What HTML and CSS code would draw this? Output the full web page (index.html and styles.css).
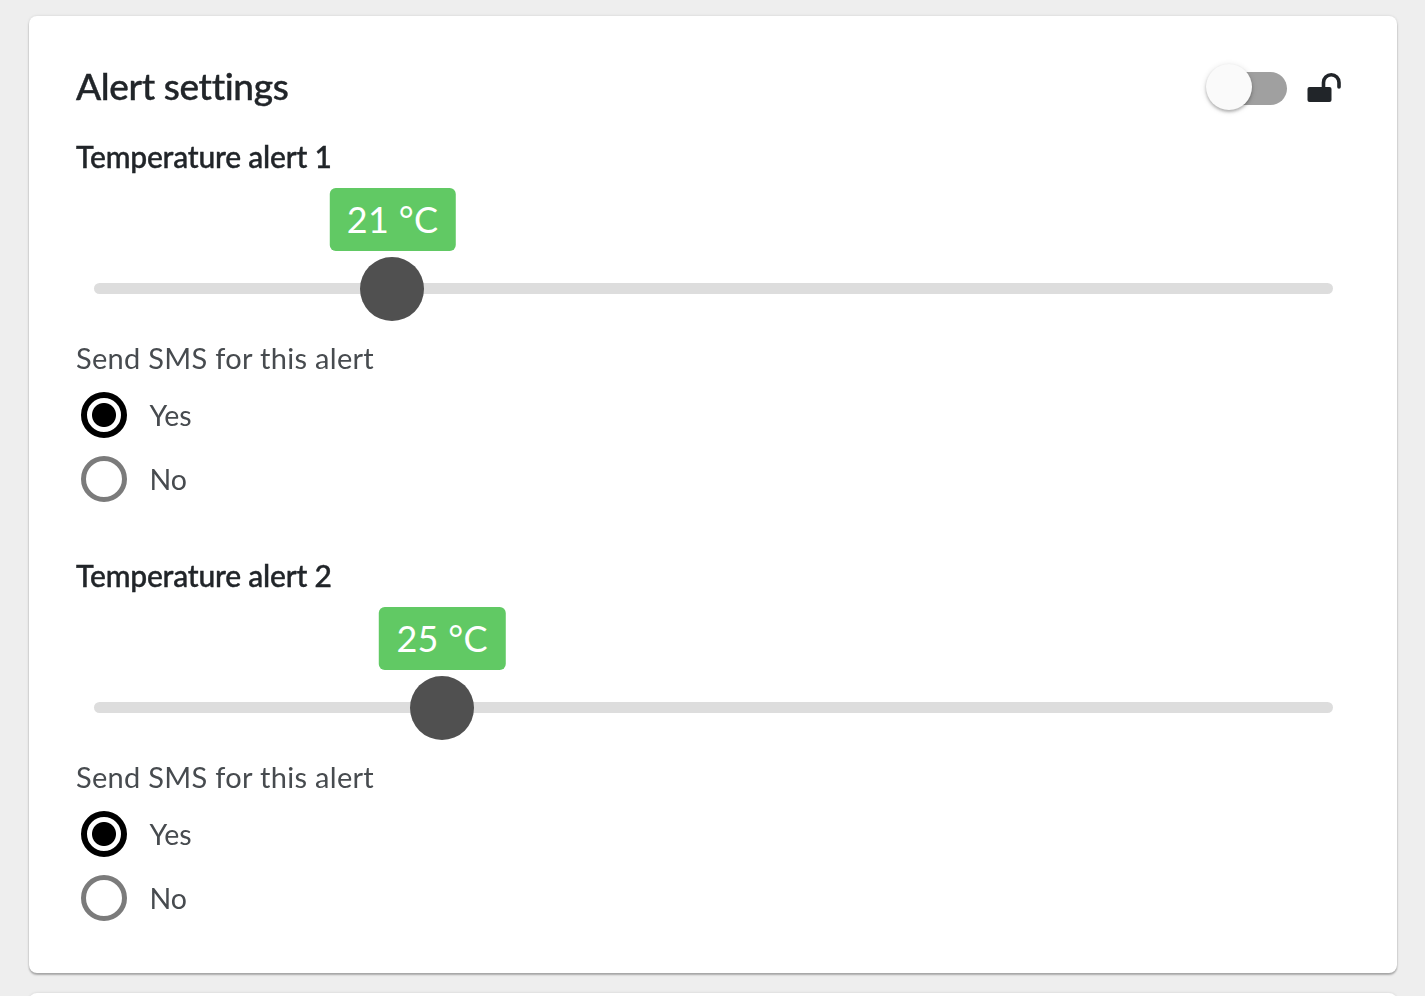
FILE: index.html
```html
<!DOCTYPE html>
<html lang="en">
<head>
<meta charset="utf-8">
<title>Alert settings</title>
<link rel="stylesheet" href="styles.css">
</head>
<body>
<main class="page">
  <section class="card">
    <header class="card-head">
      <h1 class="title">Alert settings</h1>
      <div class="controls">
        <span class="switch"><span class="switch-knob"></span></span>
        <svg class="lock" viewBox="0 0 36 32" aria-hidden="true">
          <rect x="0.5" y="15" width="24" height="15" rx="2" fill="#212529"/>
          <path d="M16.5 15V10.5a7.5 7.5 0 0 1 15.5 0V15" fill="none" stroke="#212529" stroke-width="3.6" stroke-linecap="round"/>
        </svg>
      </div>
    </header>

    <div class="alert">
      <h2 class="alert-name">Temperature alert 1</h2>
      <div class="slider">
        <div class="track">
          <span class="bubble" style="left:24.1%">21 °C</span>
          <span class="thumb" style="left:24.05%"></span>
        </div>
      </div>
      <p class="field-label">Send SMS for this alert</p>
      <div class="radio-row"><span class="radio radio-on"></span><span class="radio-text">Yes</span></div>
      <div class="radio-row"><span class="radio"></span><span class="radio-text">No</span></div>
    </div>

    <div class="alert">
      <h2 class="alert-name">Temperature alert 2</h2>
      <div class="slider">
        <div class="track">
          <span class="bubble" style="left:28.1%">25 °C</span>
          <span class="thumb" style="left:28.05%"></span>
        </div>
      </div>
      <p class="field-label">Send SMS for this alert</p>
      <div class="radio-row"><span class="radio radio-on"></span><span class="radio-text">Yes</span></div>
      <div class="radio-row"><span class="radio"></span><span class="radio-text">No</span></div>
    </div>
  </section>
  <section class="card card-next"></section>
</main>
</body>
</html>
```
FILE: styles.css
```css
html, body {
  margin: 0;
  height: 100%;
  overflow: hidden;
}

body {
  background: #eeeeee;
  font-family: Lato, "Liberation Sans", sans-serif;
  color: #212529;
}

.page {
  padding: 16px 28px 0 29px;
  filter: blur(0.5px);
}

.card {
  box-sizing: border-box;
  background: #fff;
  border-radius: 8px;
  padding: 50px 47px 43px;
  box-shadow: 0 2px 2px rgba(0, 0, 0, 0.28), 0 0 3px rgba(0, 0, 0, 0.12);
}

.card-next {
  margin-top: 20px;
  height: 120px;
  padding: 0;
}

.card-head {
  display: flex;
  justify-content: space-between;
  align-items: center;
  height: 44px;
}

.title {
  margin: -2px 0 2px;
  font-size: 37px;
  line-height: 44px;
  font-weight: 500;
  letter-spacing: -0.35px;
  -webkit-text-stroke: 0.4px #212529;
}

.controls {
  display: flex;
  align-items: center;
  gap: 20px;
  margin-right: 7px;
}

.switch {
  position: relative;
  display: block;
  width: 76px;
  height: 33px;
  margin-left: 5px;
  border-radius: 17px;
  background: #a0a0a0;
}

.switch-knob {
  position: absolute;
  left: -5px;
  top: -8px;
  width: 46px;
  height: 46px;
  border-radius: 50%;
  background: #fafafa;
  box-shadow: 0 2px 3px rgba(0, 0, 0, 0.25), 0 1px 6px rgba(0, 0, 0, 0.12);
}

.lock {
  display: block;
  width: 36px;
  height: 32px;
}

.alert-name {
  margin: 28px 0 1px;
  font-size: 30px;
  line-height: 36px;
  font-weight: 500;
  letter-spacing: -0.2px;
  -webkit-text-stroke: 0.4px #212529;
}

.alert + .alert .alert-name {
  margin-top: 46px;
}

.slider {
  height: 166px;
  padding: 108px 17px 0 18px;
  box-sizing: border-box;
}

.track {
  position: relative;
  height: 11px;
  border-radius: 6px;
  background: #dddddd;
}

.bubble {
  position: absolute;
  bottom: 43px;
  transform: translateX(-50%);
  height: 63px;
  padding: 0 17.5px;
  border-radius: 6px;
  background: #61c964;
  color: #fff;
  font-size: 36px;
  line-height: 63px;
  letter-spacing: 0.3px;
  white-space: nowrap;
}

.thumb {
  position: absolute;
  top: -26px;
  width: 64px;
  height: 64px;
  transform: translateX(-50%);
  border-radius: 50%;
  background: #505050;
}

.field-label {
  margin: -1px 0 7px;
  font-size: 29px;
  line-height: 36px;
  color: #474b4f;
  letter-spacing: 0.3px;
}

.radio-row {
  display: flex;
  align-items: center;
  height: 64px;
  padding-left: 4.5px;
}

.radio {
  box-sizing: border-box;
  display: block;
  width: 46px;
  height: 46px;
  border: 5px solid #7b7b7b;
  border-radius: 50%;
  background: #fff;
}

.radio-on {
  border: 6px solid #000;
  background: radial-gradient(circle, #000 0 11.5px, #fff 12.5px);
}

.radio-text {
  margin-left: 23px;
  margin-top: -1px;
  font-size: 28.5px;
  color: #474b4f;
}
```
